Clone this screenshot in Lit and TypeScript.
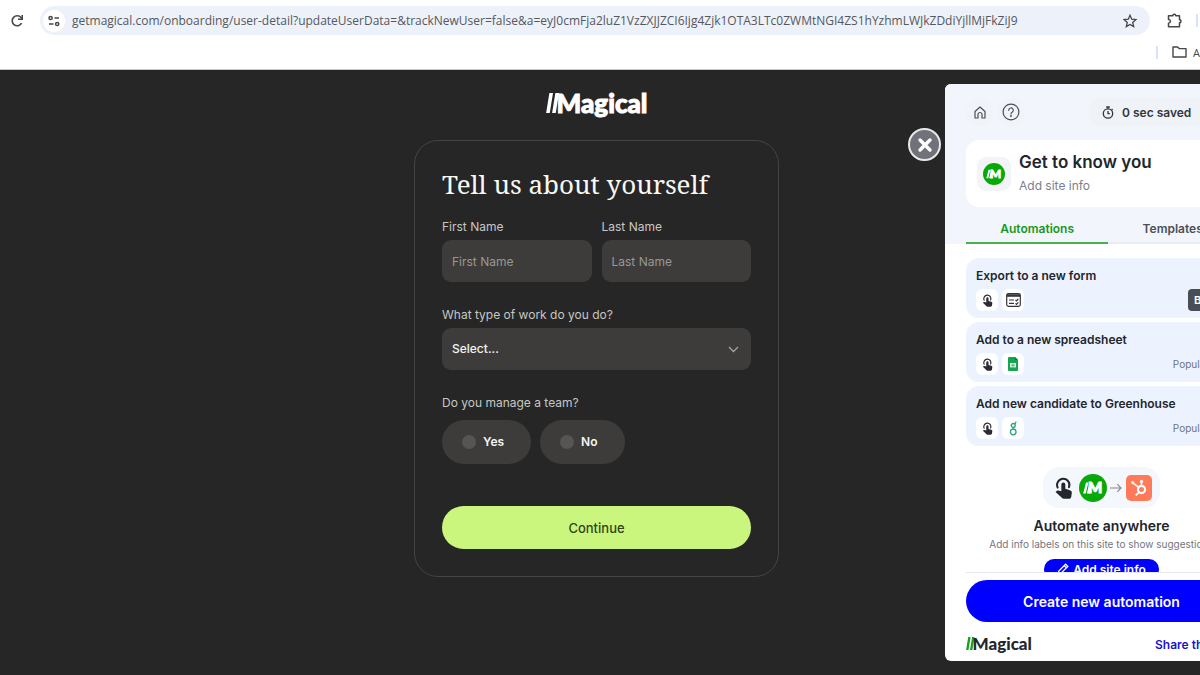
import { LitElement, html, css } from "lit";
import { customElement, property } from "lit/decorators.js";

const touchIcon = html`<svg class="touch" viewBox="0 0 24 28" aria-hidden="true">
  <path d="M4.600 13.400A7.800 7.800 0 1 1 18.900 13" fill="none" stroke="currentColor" stroke-width="2.500" stroke-linecap="round" />
  <path d="M9.300 9.600a2.500 2.500 0 0 1 5 0v5.400l5.800 1.700c1.700.5 2.600 1.700 2.400 3.400l-.7 4.800c-.3 1.500-1.300 2.600-2.900 2.600h-6.500c-1 0-1.800-.4-2.500-1.200L2 19l1.200-1.300c.6-.6 1.400-.8 2.200-.6l3.900 1z" fill="currentColor" />
</svg>`;

@customElement("magical-mark")
export class MagicalMark extends LitElement {
  static styles = css`
    :host { display: inline-flex; }
    svg { width: 100%; height: 100%; }
    .letter { font: 900 15px Lato, sans-serif; fill: #fff; stroke: #fff; stroke-width: 1; }
  `;
  render() {
    return html`<svg viewBox="0 0 28 28" role="img" aria-label="Magical">
      <circle cx="14" cy="14" r="14" fill="#07a807" />
      <path d="M7 8.500h2.400L6.700 19.500H4.200zM10.600 8.500H13L10.300 19.500H7.800z" fill="#fff" />
      <text class="letter" x="9" y="19">M</text>
    </svg>`;
  }
}

@customElement("magical-wordmark")
export class MagicalWordmark extends LitElement {
  static styles = css`
    :host { display: inline-flex; align-items: flex-start; font-family: Lato, "Open Sans", sans-serif; font-weight: 900; }
    .slashes { height: 0.8em; width: 0.5em; margin-top: 0.18em; margin-right: -2px; fill: var(--slash, currentColor); }
    .name { line-height: 1.2; -webkit-text-stroke: var(--heft, 1px) currentColor; }
  `;
  render() {
    return html`<svg class="slashes" viewBox="0 0 10 16" aria-hidden="true">
        <path d="M2.600 0h2.800L2.800 16H0zM7.200 0H10L7.400 16H4.600z" />
      </svg><span class="name">Magical</span>`;
  }
}

@customElement("browser-bar")
export class BrowserBar extends LitElement {
  static styles = css`
    :host { display: block; background: #fff; color: #474747; overflow: hidden; border-bottom: 1px solid #c9c9c9; font-family: "Open Sans", "Noto Sans", sans-serif; }
    button { border: 0; padding: 0; background: none; color: inherit; display: flex; align-items: center; justify-content: center; }
    .toolbar { display: flex; align-items: center; height: 41px; padding-right: 2px; }
    .reload { width: 16px; margin: 0 15px 0 9px; }
    .reload svg { width: 14px; height: 14px; }
    .address { flex: 1; min-width: 0; height: 29px; display: flex; align-items: center; border-radius: 15px; background: #edf1fa; padding: 0 13px 0 3px; }
    .site { width: 22px; height: 22px; border-radius: 50%; background: #fff; margin-right: 7px; flex: none; }
    .url { flex: 1; min-width: 0; border: 0; padding: 0; background: none; outline: 0; font: 12px "Open Sans", "Noto Sans", sans-serif; color: #55585c; }
    .ext { margin: 0 13px 0 17px; }
    .rule { width: 2px; height: 13px; background: #d3e3fd; }
    .bookmarks { display: flex; align-items: center; justify-content: flex-end; height: 22px; padding-bottom: 6px; }
    .folder { margin: 0 5px 0 14px; }
    .all { width: 7px; overflow: hidden; white-space: nowrap; font-size: 11px; color: inherit; text-decoration: none; }
  `;
  render() {
    return html`
      <div class="toolbar">
        <button class="reload" aria-label="Reload">
          <svg viewBox="0 0 14 14" fill="none" stroke="currentColor" stroke-width="1.600"><path d="M11.600 9.200A5 5 0 1 1 11 3.500l1 1.200" /><path d="M12.200 1v4.200H8" /></svg>
        </button>
        <div class="address">
          <button class="site" aria-label="View site information">
            <svg width="12" height="12" viewBox="0 0 12 12" fill="none" stroke="currentColor" stroke-width="1.500"><circle cx="2.600" cy="3" r="1.600" /><path d="M6.500 3H11M1 9h4.500" /><circle cx="9.200" cy="9" r="1.600" /></svg>
          </button>
          <input class="url" aria-label="Address" .value=${"getmagical.com/onboarding/user-detail?updateUserData=&trackNewUser=false&a=eyJ0cmFja2luZ1VzZXJJZCI6Ijg4Zjk1OTA3LTc0ZWMtNGI4ZS1hYzhmLWJkZDdiYjllMjFkZiJ9"} />
          <button aria-label="Bookmark this tab">
            <svg width="14" height="14" viewBox="0 0 14 14" fill="none" stroke="currentColor" stroke-width="1.300"><path d="M7 1.300l1.700 3.900 4.200.4-3.200 2.800 1 4.200L7 10.400l-3.700 2.200 1-4.200L1.100 5.600l4.200-.4z" /></svg>
          </button>
        </div>
        <button class="ext" aria-label="Extensions">
          <svg width="16" height="16" viewBox="0 0 16 16" fill="none" stroke="currentColor" stroke-width="1.500" stroke-linejoin="round"><path d="M1.500 2.800h4.300a1.500 1.500 0 0 1 3 0h3.700v4a1.500 1.500 0 0 1 0 3v4h-11v-3.600c2.600-.3 2.600-3.500 0-3.800z" /></svg>
        </button>
        <span class="rule"></span>
      </div>
      <div class="bookmarks">
        <span class="rule"></span>
        <svg class="folder" width="16" height="12" viewBox="0 0 16 12" fill="none" stroke="currentColor" stroke-width="1.400" stroke-linejoin="round"><path d="M1 1h4.600l1.600 1.600H14v8.400H1z" /></svg>
        <a class="all" href="#">All Bookmarks</a>
      </div>
    `;
  }
}

@customElement("detail-form")
export class DetailForm extends LitElement {
  static styles = css`
    :host { display: block; width: 365px; max-width: 100%; font-family: Inter, "Liberation Sans", sans-serif; font-size: 12px; line-height: 16px; color: #c6c6c4; }
    * { box-sizing: border-box; }
    form { display: flex; flex-direction: column; gap: 25px; padding: 23px 27px 27px; border: 1px solid #444; border-radius: 24px; }
    h1 { margin: 0 0 -10px; font: 400 26px/40px "Noto Serif", "Liberation Serif", serif; color: #f8f8f4; white-space: nowrap; }
    .pair { display: grid; grid-template-columns: 1fr 1fr; gap: 10px; }
    .field { display: flex; flex-direction: column; gap: 5px; min-width: 0; }
    .box { width: 100%; height: 42px; border: 0; border-radius: 9px; background: #3d3c3a; padding: 0 10px; font: inherit; color: #f4f4f2; appearance: none; }
    .box::placeholder { color: #989795; opacity: 1; }
    .picker { display: grid; align-items: center; }
    .picker > * { grid-area: 1 / 1; }
    .picker .box { font-weight: 500; }
    .chevron { justify-self: end; margin-right: 12px; pointer-events: none; }
    fieldset { border: 0; margin: 0; padding: 0; min-width: 0; }
    legend { padding: 0; margin-bottom: 9px; }
    .choices { display: flex; gap: 9px; }
    .choice { display: flex; align-items: center; gap: 7px; height: 44px; padding: 0 27px 0 20px; border-radius: 22px; background: #3d3c3a; color: #f4f4f2; font-weight: 600; }
    .choice input { appearance: none; width: 14px; height: 14px; margin: 0; border-radius: 50%; background: #565553; }
    .choice input:checked { background: #cbf77e; }
    .go { height: 43px; margin-top: 17px; border: 0; border-radius: 22px; background: #cbf67d; color: #32431a; font: 500 13px Inter, "Liberation Sans", sans-serif; }
  `;
  render() {
    return html`<form @submit=${(e: Event) => e.preventDefault()}>
      <h1>Tell us about yourself</h1>
      <div class="pair">
        <div class="field"><label for="first">First Name</label><input class="box" id="first" placeholder="First Name" /></div>
        <div class="field"><label for="last">Last Name</label><input class="box" id="last" placeholder="Last Name" /></div>
      </div>
      <div class="field">
        <label for="work">What type of work do you do?</label>
        <div class="picker">
          <select class="box" id="work"><option>Select...</option></select>
          <svg class="chevron" width="11" height="7" viewBox="0 0 11 7" fill="none" stroke="#a5a4a2" stroke-width="1.300"><path d="M1 1l4.500 4.500L10 1" /></svg>
        </div>
      </div>
      <fieldset>
        <legend>Do you manage a team?</legend>
        <div class="choices">
          <label class="choice"><input type="radio" name="team" value="yes" />Yes</label>
          <label class="choice"><input type="radio" name="team" value="no" />No</label>
        </div>
      </fieldset>
      <button class="go">Continue</button>
    </form>`;
  }
}

@customElement("automation-card")
export class AutomationCard extends LitElement {
  @property() heading = "";
  @property() kind: "form" | "sheet" | "greenhouse" = "form";
  @property() tag = "";
  static styles = css`
    :host { display: block; box-sizing: border-box; height: 60px; padding: 9px 10px 7px; border-radius: 13px; background: #edf3fe; }
    h3 { margin: 0 0 5px; font: 600 12px/17px Inter, sans-serif; color: #22262d; white-space: nowrap; }
    .row { display: flex; align-items: center; gap: 4px; }
    .tile { width: 22px; height: 22px; border-radius: 6px; background: #fff; display: flex; align-items: center; justify-content: center; color: #2a2d33; }
    .touch { width: 11px; height: 13px; }
    .tag { margin-left: auto; padding-right: 18px; font-size: 10px; line-height: 22px; color: #6d7480; }
    .badge { margin-left: auto; width: 39px; box-sizing: border-box; padding-left: 6px; font-size: 11px; font-weight: 600; line-height: 22px; border-radius: 4px; background: #494d56; color: #fff; }
  `;
  private icon() {
    if (this.kind === "form")
      return html`<svg width="15" height="14" viewBox="0 0 15 14" fill="none" stroke="#33363c" stroke-width="1.200"><rect x=".7" y=".7" width="13.600" height="12.600" rx="1.800" /><path d="M.7 2.500h13.600" stroke-width="2.600" /><path d="M3 7h5M3 10.400h5M9.500 7l1 1 1.800-2M9.500 10.400l1 1 1.800-2" /></svg>`;
    if (this.kind === "sheet")
      return html`<svg width="10" height="14" viewBox="0 0 10 14"><path d="M1 0h6l3 3v10a1 1 0 0 1-1 1H1a1 1 0 0 1-1-1V1a1 1 0 0 1 1-1z" fill="#14a452" /><path d="M7 0l3 3H7z" fill="#0b7a3b" /><path d="M2 6h6v4.400H2z" fill="#d9f3e3" /><path d="M3 8.200h4M5 6.600v3.200" stroke="#14a452" stroke-width=".7" /></svg>`;
    return html`<svg width="9" height="15" viewBox="0 0 9 15" fill="none" stroke="#24a47f" stroke-width="1.300"><circle cx="4.200" cy="4.500" r="2" /><circle cx="4.200" cy="11" r="2.800" /><path d="M5.500 3C6.700 2.600 6.900 1.800 6.900.8M4.200 6.500v1.700" stroke-linecap="round" /></svg>`;
  }
  render() {
    return html`<h3>${this.heading}</h3>
      <div class="row">
        <span class="tile">${touchIcon}</span>
        <span class="tile">${this.icon()}</span>
        <span class=${this.tag === "Beta" ? "badge" : "tag"}>${this.tag}</span>
      </div>`;
  }
}

@customElement("magical-panel")
export class MagicalPanel extends LitElement {
  static styles = css`
    :host { display: flex; flex-direction: column; width: 313px; border-radius: 6px; background: #fff; font-family: Inter, sans-serif; color: #22262d; }
    * { box-sizing: border-box; }
    button { font-family: inherit; border: 0; padding: 0; }
    .head { padding: 14px 21px 0; border-radius: 6px 6px 0 0; background: #f2f6fc; }
    .tools { display: flex; align-items: center; gap: 4px; height: 28px; margin-bottom: 14px; }
    .round { width: 27px; height: 27px; border-radius: 50%; background: #f0f3f8; color: #4b4f57; display: flex; align-items: center; justify-content: center; }
    .saved { margin-left: auto; width: 148px; height: 28px; border-radius: 14px; background: #eff2f7; display: flex; align-items: center; gap: 8px; padding-left: 13px; font-size: 12px; font-weight: 600; color: #33363d; white-space: nowrap; }
    .site { display: flex; align-items: center; gap: 8px; height: 67px; padding: 0 11px; border-radius: 13px; background: #fff; }
    .badge { width: 34px; height: 34px; border-radius: 9px; background: #f3f4f8; display: flex; align-items: center; justify-content: center; }
    .badge magical-mark { width: 22px; height: 22px; }
    h2 { margin: 0 0 3px; font-size: 17px; line-height: 22px; font-weight: 600; white-space: nowrap; }
    .sub { font-size: 12px; line-height: 20px; color: #7b8088; text-decoration: none; display: block; }
    .tabs { display: flex; height: 37px; padding-top: 7px; }
    .tab { flex: 1 1 auto; background: none; font-size: 12px; font-weight: 600; color: #4b5058; border-bottom: 2px solid #e9edf3; }
    .tab.on { color: #15991f; border-bottom-color: #4cae52; }
    .body { flex: 1; min-height: 0; overflow: hidden; padding: 14px 21px 0; display: flex; flex-direction: column; gap: 4px; }
    automation-card { flex: none; }
    .anywhere { display: flex; flex-direction: column; align-items: center; margin-top: 17px; flex: none; }
    .flow { display: flex; align-items: center; height: 41px; padding: 0 8px 0 11px; border-radius: 16px; background: #f4f7fc; margin-bottom: 8px; }
    .flow .touch { width: 19px; height: 24px; margin-right: 6px; }
    .flow magical-mark { width: 28px; height: 28px; }
    .arrow { margin: 0 4px 0 3px; }
    h4 { margin: 0; font-size: 14px; line-height: 20px; font-weight: 600; }
    p { margin: 0 0 7px; font-size: 10px; line-height: 16px; color: #71767e; white-space: nowrap; }
    .add { height: 20px; width: 115px; border-radius: 10px; background: #00f; color: #fff; font-size: 12px; font-weight: 600; display: flex; align-items: center; justify-content: center; gap: 4px; white-space: nowrap; }
    .foot { margin: 0 21px; padding: 7px 0 1px; border-top: 1px solid #e6e9f0; }
    .create { width: 100%; height: 42px; border-radius: 21px; background: #00f; color: #fff; font-size: 14px; font-weight: 600; }
    .brand { display: flex; align-items: center; justify-content: space-between; height: 32px; margin-top: 6px; }
    .brand magical-wordmark { font-size: 17px; --slash: #10a51b; --heft: 0; }
    .share { font-size: 12px; font-weight: 600; color: #1a14c8; text-decoration: none; width: 82px; white-space: nowrap; }
  `;
  render() {
    return html`
      <header class="head">
        <div class="tools">
          <button class="round" aria-label="Home"><svg width="12" height="13" viewBox="0 0 12 13" fill="none" stroke="currentColor" stroke-width="1.200" stroke-linejoin="round"><path d="M1 5.500L6 1l5 4.500V12H8V8.500a2 2 0 0 0-4 0V12H1z" /></svg></button>
          <button class="round" aria-label="Help"><svg width="18" height="18" viewBox="0 0 18 18" fill="none" stroke="currentColor" stroke-width="1.200"><circle cx="9" cy="9" r="7.900" /><path d="M6.700 7.300a2.300 2.300 0 1 1 3.500 1.900C9.300 9.700 9 10 9 11" stroke-linecap="round" /><circle cx="9" cy="13" r=".4" /></svg></button>
          <button class="saved"><svg width="12" height="13" viewBox="0 0 12 13" fill="none" stroke="currentColor" stroke-width="1.300"><circle cx="6" cy="7.500" r="4.700" /><path d="M4.200 1h3.600M6 1v1.800M6 5v2.700h1.800M9.600 3l1 1" /></svg>0 sec saved</button>
        </div>
        <div class="site">
          <span class="badge"><magical-mark></magical-mark></span>
          <div><h2>Get to know you</h2><a class="sub" href="#">Add site info</a></div>
        </div>
        <nav class="tabs">
          <button class="tab on">Automations</button>
          <button class="tab">Templates</button>
        </nav>
      </header>
      <div class="body">
        <automation-card heading="Export to a new form" kind="form" tag="Beta"></automation-card>
        <automation-card heading="Add to a new spreadsheet" kind="sheet" tag="Popular"></automation-card>
        <automation-card heading="Add new candidate to Greenhouse" kind="greenhouse" tag="Popular"></automation-card>
        <section class="anywhere">
          <div class="flow">
            ${touchIcon}
            <magical-mark></magical-mark>
            <svg class="arrow" width="12" height="10" viewBox="0 0 12 10" fill="none" stroke="#85888f" stroke-width="1.100"><path d="M0 5h11M7.300 1.200L11 5 7.300 8.800" /></svg>
            <svg width="26" height="26" viewBox="0 0 26 26" fill="none" stroke="#fff"><rect width="26" height="26" rx="5" fill="#ff7a59" stroke="none" /><circle cx="15.500" cy="14.500" r="3.600" stroke-width="2.200" /><path d="M15.500 10.500V7M12.700 12.300L6.500 7.600M13 17.200l-2.300 2.300" stroke-width="1.500" /><circle cx="15.500" cy="6.500" r="1.200" fill="#fff" /><circle cx="6.600" cy="7.500" r="1.100" fill="#fff" /><circle cx="10.500" cy="19.600" r=".8" fill="#fff" /></svg>
          </div>
          <h4>Automate anywhere</h4>
          <p>Add info labels on this site to show suggestions</p>
          <button class="add"><svg width="12" height="12" viewBox="0 0 12 12" fill="none" stroke="currentColor" stroke-width="1.300"><path d="M1 11l.8-3L8.600 1.200l2.200 2.200L4 10.200zM7.200 2.600l2.200 2.200" /></svg>Add site info</button>
        </section>
      </div>
      <footer class="foot">
        <button class="create">Create new automation</button>
        <div class="brand"><magical-wordmark></magical-wordmark><a class="share" href="#">Share the love</a></div>
      </footer>
    `;
  }
}

@customElement("app-root")
export class AppRoot extends LitElement {
  static styles = css`
    :host { display: flex; flex-direction: column; min-height: 100vh; overflow: hidden; background: #262626; }
    main { position: relative; flex: 1; display: flex; flex-direction: column; align-items: center; padding: 18px 7px 0 0; }
    .logo { font-size: 26px; color: #fff; height: 34px; margin-bottom: 18px; }
    .panel { position: absolute; top: 14px; bottom: 14px; right: -58px; }
    .close { position: absolute; top: 58px; right: 259px; width: 33px; height: 33px; padding: 0; border: 2px solid #e9e9ea; border-radius: 50%; background: #70727a; display: flex; align-items: center; justify-content: center; }
  `;
  render() {
    return html`
      <browser-bar></browser-bar>
      <main>
        <magical-wordmark class="logo"></magical-wordmark>
        <detail-form></detail-form>
        <magical-panel class="panel"></magical-panel>
        <button class="close" aria-label="Close"><svg width="16" height="16" viewBox="0 0 16 16" stroke="#fff" stroke-width="3.400" stroke-linecap="round"><path d="M3 3l10 10M13 3L3 13" /></svg></button>
      </main>
    `;
  }
}
